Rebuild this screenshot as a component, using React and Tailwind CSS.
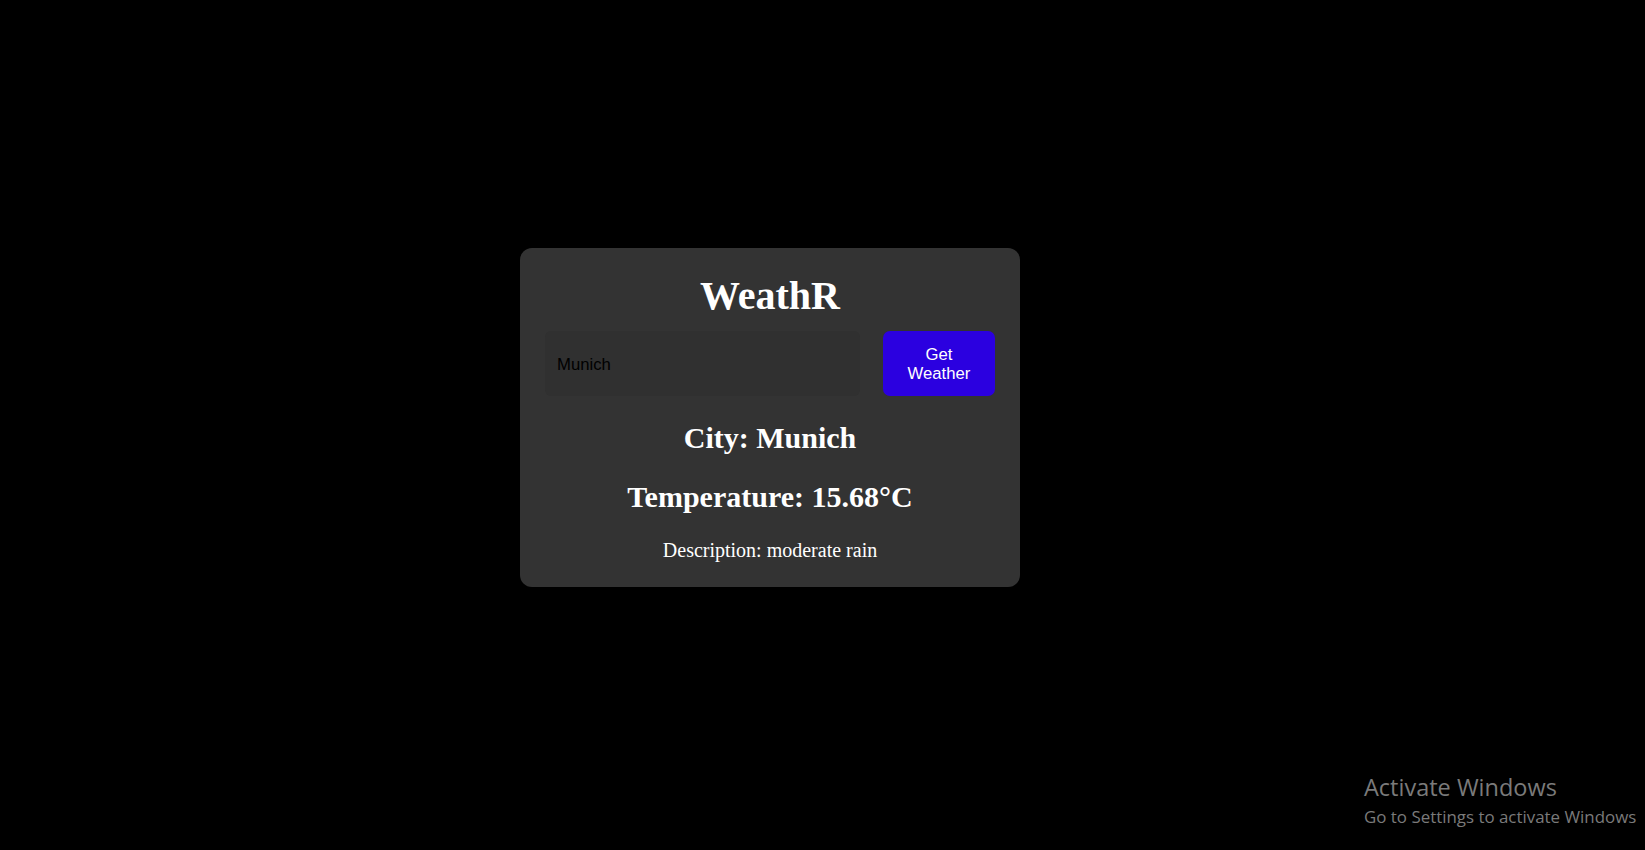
import { useState } from "react";

const serif = { fontFamily: '"Liberation Serif", "Times New Roman", serif' };

const App = () => {
  const [city, setCity] = useState("Munich");
  const weather = { name: "Munich", temp: 15.68, description: "moderate rain" };

  return (
    <div className="relative w-full h-[850px] bg-black overflow-hidden">
      <div className="pl-[520px] pt-[248px]">
        <div
          className="w-[500px] bg-[#333333] rounded-[12px] px-[25px] py-[25px] text-white text-center"
          style={serif}
        >
          <h1 className="text-[40px] font-bold leading-[46px] mb-[12px]">WeathR</h1>

          <div className="flex gap-[23px]">
            <input
              type="text"
              value={city}
              onChange={(e) => setCity(e.target.value)}
              className="w-[315px] h-[65px] bg-[#303030] rounded-[6px] px-[12px] pt-[2px] text-[16.7px] text-black outline-none font-['Liberation_Sans',Arial,sans-serif]"
            />
            <button className="w-[112px] h-[65px] bg-[#2b00e0] rounded-[7px] text-white text-[16.7px] leading-[19px] px-[12px] font-['Liberation_Sans',Arial,sans-serif]">
              Get Weather
            </button>
          </div>

          {/* Weather result */}
          <h2 className="mt-[25px] text-[30px] font-bold leading-[34px]">City: {weather.name}</h2>
          <h2 className="mt-[25px] text-[30px] font-bold leading-[34px]">Temperature: {weather.temp}°C</h2>
          <p className="mt-[25px] text-[20px] leading-[23px]">Description: {weather.description}</p>
        </div>
      </div>

      {/* Windows watermark */}
      <div className="absolute left-[1364px] top-[772px] text-[#7a7a7a] font-['Open_Sans','Noto_Sans',sans-serif] whitespace-nowrap">
        <div className="text-[23.5px] leading-[30px]">Activate Windows</div>
        <div className="text-[16.9px] leading-[22px] mt-[4px]">Go to Settings to activate Windows</div>
      </div>
    </div>
  );
};

export default App;
